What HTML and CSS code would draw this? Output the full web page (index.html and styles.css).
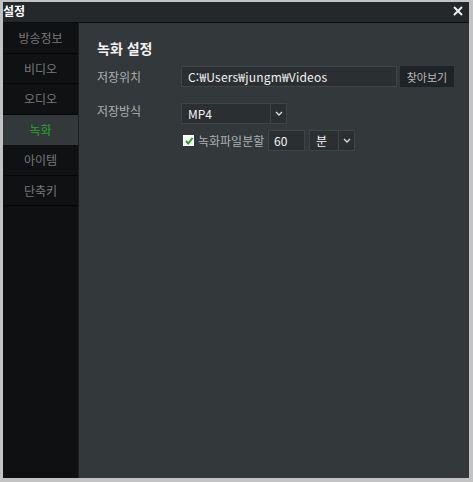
FILE: index.html
```html
<!DOCTYPE html>
<html lang="ko">
<head>
<meta charset="utf-8">
<link rel="stylesheet" href="styles.css">
</head>
<body>
<div class="window">
  <div class="titlebar">
    <span class="title">설정</span>
    <svg class="close" width="10" height="10" viewBox="0 0 10 10"><path d="M1 1L9 9M9 1L1 9" stroke="#f0f0f0" stroke-width="2"/></svg>
  </div>
  <div class="body">
    <nav class="sidebar">
      <div class="nav-item">방송정보</div>
      <div class="nav-item">비디오</div>
      <div class="nav-item">오디오</div>
      <div class="nav-item active">녹화</div>
      <div class="nav-item">아이템</div>
      <div class="nav-item">단축키</div>
    </nav>
    <main class="content">
      <h1 class="heading">녹화 설정</h1>
      <div class="row">
        <span class="label">저장위치</span>
        <div class="field path">C:₩Users₩jungm₩Videos</div>
        <div class="btn">찾아보기</div>
      </div>
      <div class="row">
        <span class="label">저장방식</span>
        <div class="select format"><span class="val">MP4</span><span class="arrow"><svg width="8" height="5" viewBox="0 0 8 5"><path d="M1 1L4 4L7 1" stroke="#ddd" stroke-width="1.3" fill="none"/></svg></span></div>
      </div>
      <div class="row sub">
        <span class="check"><svg width="10" height="10" viewBox="0 0 10 10"><path d="M2 5L4.2 7.5L8.5 2" stroke="#1ea01e" stroke-width="2" fill="none"/></svg></span>
        <span class="check-label">녹화파일분할</span>
        <div class="field num">60</div>
        <div class="select unit"><span class="val">분</span><span class="arrow"><svg width="8" height="5" viewBox="0 0 8 5"><path d="M1 1L4 4L7 1" stroke="#ddd" stroke-width="1.3" fill="none"/></svg></span></div>
      </div>
    </main>
  </div>
</div>
</body>
</html>
```

FILE: styles.css
```css
* { box-sizing: border-box; }
html, body { margin: 0; padding: 0; }
body {
  width: 473px;
  height: 482px;
  background: #c3c3c3;
  font-family: "Noto Sans CJK KR", "Noto Sans", sans-serif;
  padding: 2px 4px 4px 3px;
}
.window {
  width: 466px;
  height: 476px;
  display: flex;
  flex-direction: column;
  background: #33383b;
}
.titlebar {
  height: 21px;
  background: #24282b;
  border-bottom: 1px solid #0b0c0d;
  display: flex;
  align-items: center;
  justify-content: space-between;
  padding: 0 6px 0 0;
}
.title {
  color: #fff;
  font-weight: bold;
  font-size: 12px;
  line-height: 1;
  margin-top: -3px;
}
.close { margin-top: -2px; }
.body {
  flex: 1;
  display: flex;
}
.sidebar {
  width: 76px;
  background: #0f1012;
  border-right: 1px solid #1c1e20;
  display: flex;
  flex-direction: column;
}
.nav-item {
  height: 30.5px;
  display: flex;
  align-items: center;
  justify-content: center;
  color: #76787a;
  font-size: 12px;
  border-bottom: 1px solid #060707;
  background: #101113;
}
.nav-item.active {
  background: #33383b;
  color: #21a821;
  border-bottom-color: #33383b;
}
.content {
  flex: 1;
  padding: 15px 0 0 18px;
}
.heading {
  margin: 0 0 8px;
  color: #f2f2f2;
  font-size: 14px;
  font-weight: bold;
  line-height: 20px;
}
.row {
  display: flex;
  align-items: center;
  margin-bottom: 13px;
}
.row.sub { margin-top: -7px; padding-left: 86px; }
.label {
  width: 84px;
  color: #aeb0b1;
  font-size: 12px;
  align-self: flex-start;
  margin-top: 2px;
}
.field {
  height: 21px;
  background: #2b2f32;
  border: 1px solid #3e4346;
  color: #f2f2f2;
  font-size: 12px;
  display: flex;
  align-items: center;
  padding-left: 6px;
  letter-spacing: 0.2px;
}
.path { width: 216px; }
.btn {
  width: 54px;
  height: 21px;
  margin-left: 3px;
  background: #1f2326;
  color: #b9bbbc;
  font-size: 11px;
  display: flex;
  align-items: center;
  justify-content: center;
}
.select {
  height: 21px;
  background: #2b2f32;
  border: 1px solid #3e4346;
  display: flex;
  align-items: center;
  color: #f2f2f2;
  font-size: 12px;
}
.select .val { flex: 1; padding-left: 6px; }
.select .arrow {
  width: 16px;
  height: 100%;
  border-left: 1px solid #3e4346;
  display: flex;
  align-items: center;
  justify-content: center;
}
.format { width: 106px; margin-top: 3px; }
.check {
  width: 11px;
  height: 11px;
  background: #fff;
  display: flex;
  align-items: center;
  justify-content: center;
}
.check-label {
  color: #aeb0b1;
  font-size: 12px;
  margin-left: 4px;
  width: 70px;
}
.num { width: 37px; padding-left: 5px; }
.unit { width: 46px; margin-left: 4px; }
```
